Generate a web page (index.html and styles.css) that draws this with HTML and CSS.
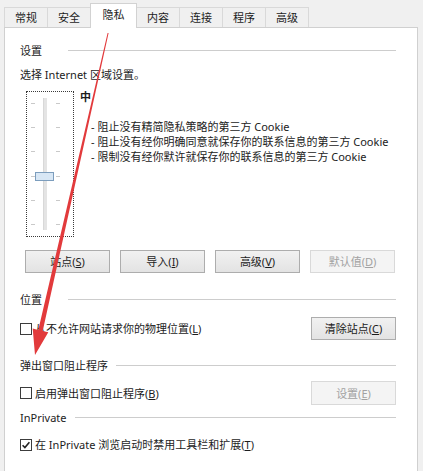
FILE: index.html
```html
<!DOCTYPE html>
<html lang="zh-CN">
<head>
<meta charset="utf-8">
<title>Internet 选项 - 隐私</title>
<link rel="stylesheet" href="styles.css">
</head>
<body>
<div class="dialog">
  <div class="tabs">
    <div class="tab">常规</div>
    <div class="tab">安全</div>
    <div class="tab active">隐私</div>
    <div class="tab">内容</div>
    <div class="tab">连接</div>
    <div class="tab">程序</div>
    <div class="tab">高级</div>
  </div>
  <div class="panel">
    <div class="group-head"><span class="gh-label">设置</span><span class="gh-line"></span></div>
    <div class="intro">选择 Internet 区域设置。</div>
    <div class="zone">
      <div class="slider">
        <div class="ticks"><i></i><i></i><i></i><i></i><i></i><i></i></div>
        <div class="track"><div class="thumb"></div></div>
        <div class="ticks"><i></i><i></i><i></i><i></i><i></i><i></i></div>
      </div>
      <div class="zone-text">
        <div class="level">中</div>
        <ul class="bullets">
          <li>- 阻止没有精简隐私策略的第三方 Cookie</li>
          <li>- 阻止没有经你明确同意就保存你的联系信息的第三方 Cookie</li>
          <li>- 限制没有经你默许就保存你的联系信息的第三方 Cookie</li>
        </ul>
      </div>
    </div>
    <div class="btn-row">
      <div class="btn">站点(<u>S</u>)</div>
      <div class="btn">导入(<u>I</u>)</div>
      <div class="btn">高级(<u>V</u>)</div>
      <div class="btn disabled">默认值(<u>D</u>)</div>
    </div>

    <div class="group-head sec-location"><span class="gh-label">位置</span><span class="gh-line"></span></div>
    <div class="opt-row row-location">
      <label class="check"><span class="box"></span><span>从不允许网站请求你的物理位置(<u>L</u>)</span></label>
      <div class="btn side">清除站点(<u>C</u>)</div>
    </div>

    <div class="group-head sec-popup"><span class="gh-label">弹出窗口阻止程序</span><span class="gh-line"></span></div>
    <div class="opt-row row-popup">
      <label class="check"><span class="box"></span><span>启用弹出窗口阻止程序(<u>B</u>)</span></label>
      <div class="btn side tall disabled">设置(<u>E</u>)</div>
    </div>

    <div class="group-head sec-private"><span class="gh-label">InPrivate</span><span class="gh-line"></span></div>
    <div class="opt-row row-private">
      <label class="check">
        <span class="box checked"><svg width="10" height="10" viewBox="0 0 10 10"><path d="M1.6 5.2 L3.9 7.6 L8.4 2.2" fill="none" stroke="#222" stroke-width="1.6"/></svg></span>
        <span>在 InPrivate 浏览启动时禁用工具栏和扩展(<u>T</u>)</span>
      </label>
    </div>
  </div>
</div>
<svg class="arrow" width="423" height="471" viewBox="0 0 423 471">
  <polygon points="107.6,32.9 108.6,33.1 42.7,330.9 48.3,332.2 35,355 32.7,328.6 38.3,329.9" fill="#e23a3c"/>
</svg>
</body>
</html>
```

FILE: styles.css
```css
html, body {
  margin: 0;
  padding: 0;
}

body {
  width: 423px;
  height: 471px;
  overflow: hidden;
  position: relative;
  background: #f0f0f0;
  color: #1c1c1c;
  font-family: "Noto Sans", "Noto Sans CJK SC", sans-serif;
  font-size: 11px;
  line-height: 15px;
}

.dialog {
  padding: 4px 5px 0 4px;
}

/* ---------- tabs ---------- */
.tabs {
  display: flex;
  align-items: flex-end;
  height: 23px;
}

.tab {
  box-sizing: border-box;
  width: 44px;
  height: 20px;
  margin-right: -1px;
  border: 1px solid #d9d9d9;
  border-bottom: none;
  background: #f0f0f0;
  display: flex;
  align-items: center;
  justify-content: center;
  line-height: 1;
}

.tab.active {
  width: 47px;
  height: 25px;
  margin-bottom: -1px;
  padding-bottom: 3px;
  background: #ffffff;
  border-color: #d2d2d2;
  position: relative;
  z-index: 1;
}

/* ---------- panel ---------- */
.panel {
  box-sizing: border-box;
  height: 460px;
  border: 1px solid #d0d0d0;
  background: #ffffff;
  padding: 15px 21px 0 15px;
}

.group-head {
  display: flex;
  align-items: center;
  height: 15px;
}

.gh-label {
  min-width: 40px;
  margin-right: 8px;
  white-space: nowrap;
}

.gh-line {
  flex: 1;
  height: 1px;
  background: #cdcdcd;
}

.intro {
  margin-top: 9px;
}

/* ---------- zone slider ---------- */
.zone {
  display: flex;
  margin-top: 9px;
}

.slider {
  box-sizing: border-box;
  width: 48px;
  height: 146px;
  margin-left: 6px;
  border: 1px dotted #3a3a3a;
  display: flex;
  padding: 6px 0 6px 4px;
}

.ticks {
  width: 4px;
  display: flex;
  flex-direction: column;
  justify-content: space-between;
  padding: 5px 0;
}

.ticks i {
  display: block;
  height: 1px;
  background: #c9c9c9;
}

.track {
  width: 4px;
  margin: 0 9px 0 8px;
  background: #e4e4e4;
  border-left: 1px solid #d8d8d8;
  box-sizing: border-box;
  position: relative;
}

.thumb {
  position: absolute;
  left: -9px;
  top: 74px;
  box-sizing: border-box;
  width: 19px;
  height: 9px;
  border: 1px solid #7c9dbd;
  background: #d8e7f5;
}

.zone-text {
  margin-left: 6px;
}

.level {
  font-weight: bold;
  margin-top: -2px;
}

.bullets {
  list-style: none;
  margin: 15px 0 0 11px;
  padding: 0;
  color: #222;
  white-space: nowrap;
}

/* ---------- buttons ---------- */
.btn-row {
  display: grid;
  grid-template-columns: repeat(4, 85px);
  column-gap: 10px;
  margin-top: 13px;
  padding-left: 5px;
}

.btn {
  box-sizing: border-box;
  height: 23px;
  border: 1px solid #adadad;
  background: linear-gradient(#f1f1f1, #e3e3e3);
  display: flex;
  align-items: center;
  justify-content: center;
  white-space: nowrap;
}

.btn.disabled {
  background: #f4f4f4;
  border-color: #d9d9d9;
  color: #a2a2a2;
}

.btn.side {
  width: 85px;
}

.btn.tall {
  height: 24px;
}

/* ---------- option sections ---------- */
.sec-location { margin-top: 19px; }
.row-location { margin-top: 10px; }
.sec-popup { margin-top: 18px; }
.row-popup { margin-top: 8px; }
.sec-private { margin-top: 5px; }
.row-private { margin-top: 12px; }

.opt-row {
  display: flex;
  align-items: center;
  justify-content: space-between;
}

.check {
  display: flex;
  align-items: center;
  gap: 3px;
  white-space: nowrap;
}

.box {
  box-sizing: border-box;
  width: 12px;
  height: 12px;
  border: 1px solid #3c3c3c;
  background: #fff;
  display: flex;
  align-items: center;
  justify-content: center;
}

.box svg {
  display: block;
}

/* ---------- annotation arrow ---------- */
.arrow {
  position: absolute;
  left: 0;
  top: 0;
  pointer-events: none;
}
```
